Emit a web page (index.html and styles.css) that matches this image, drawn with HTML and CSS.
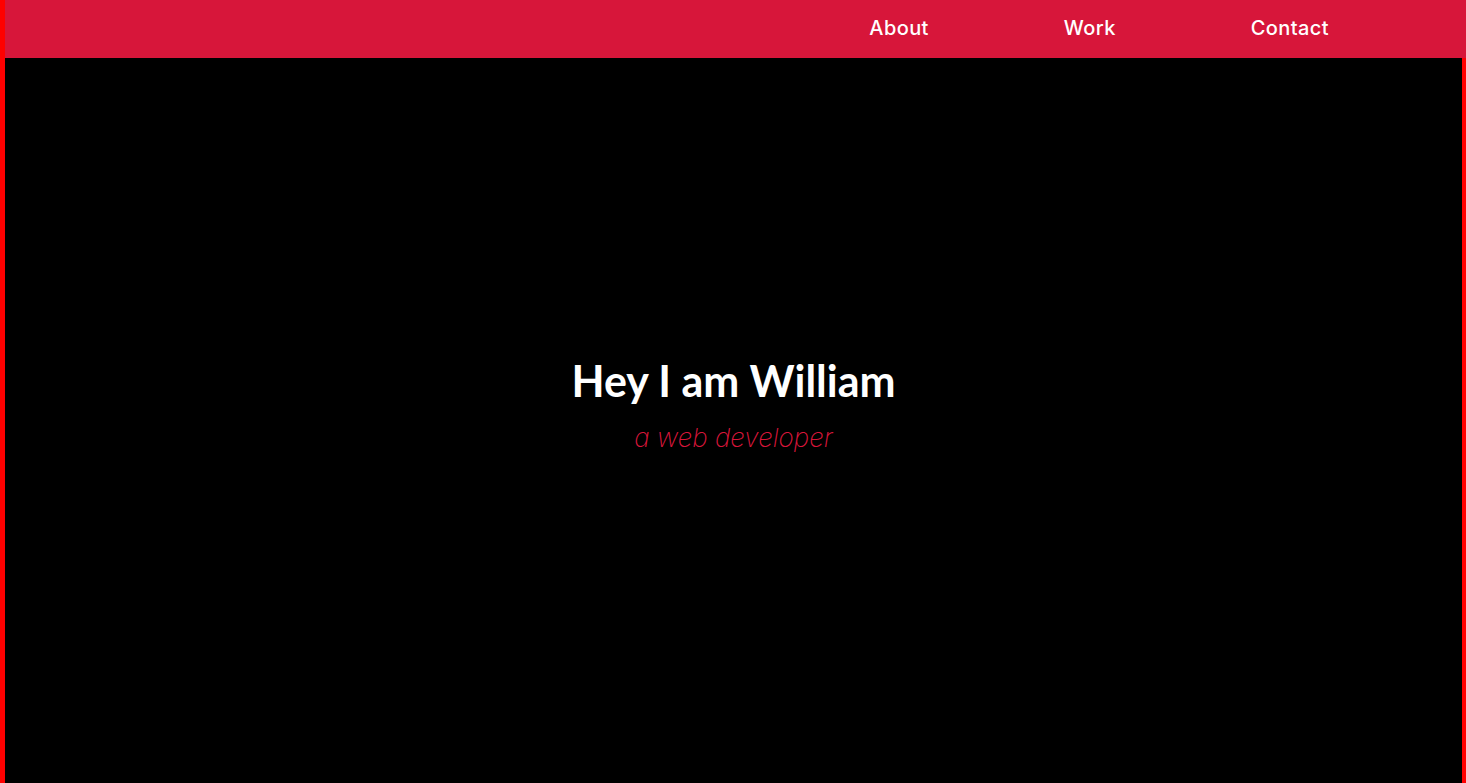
FILE: index.html
```html
<!DOCTYPE html>
<html lang="en">
<head>
<meta charset="utf-8">
<title>William</title>
<link rel="stylesheet" href="styles.css">
</head>
<body>
<nav class="nav">
  <ul class="nav-list">
    <li><a class="nav-link" href="#about">About</a></li>
    <li><a class="nav-link" href="#work">Work</a></li>
    <li><a class="nav-link" href="#contact">Contact</a></li>
  </ul>
</nav>
<main class="hero">
  <div class="hero-text">
    <h1 class="hero-title">Hey I am William</h1>
    <p class="hero-sub">a web developer</p>
  </div>
</main>
</body>
</html>
```

FILE: styles.css
```css
html, body {
  margin: 0;
  padding: 0;
}
body {
  background: #ff0000;
  padding-left: 5px;
  height: 783px;
  overflow: hidden;
  box-sizing: border-box;
}
.nav {
  background: #d7163a;
  height: 58px;
  display: flex;
  justify-content: flex-end;
  align-items: center;
  padding-right: 137px;
  padding-bottom: 2px;
  box-sizing: border-box;
}
.nav-list {
  list-style: none;
  margin: 0;
  padding: 0;
  display: flex;
  gap: 135px;
}
.nav-link {
  color: #fff;
  text-decoration: none;
  font-family: Inter, "Noto Sans", sans-serif;
  font-weight: 500;
  font-size: 20px;
  letter-spacing: 0.4px;
}
.hero {
  background: #000;
  margin-right: 4px;
  height: 725px;
  display: flex;
  justify-content: center;
  align-items: center;
  padding-bottom: 33px;
  box-sizing: border-box;
}
.hero-text {
  text-align: center;
}
.hero-title {
  margin: 0;
  color: #fff;
  font-family: Lato, "Open Sans", sans-serif;
  font-weight: 700;
  font-size: 43px;
  line-height: 1.2;
}
.hero-sub {
  margin: 16px 0 0;
  color: #d7163a;
  font-family: Inter, "Open Sans", sans-serif;
  font-weight: 200;
  font-style: italic;
  font-size: 26px;
}
```
